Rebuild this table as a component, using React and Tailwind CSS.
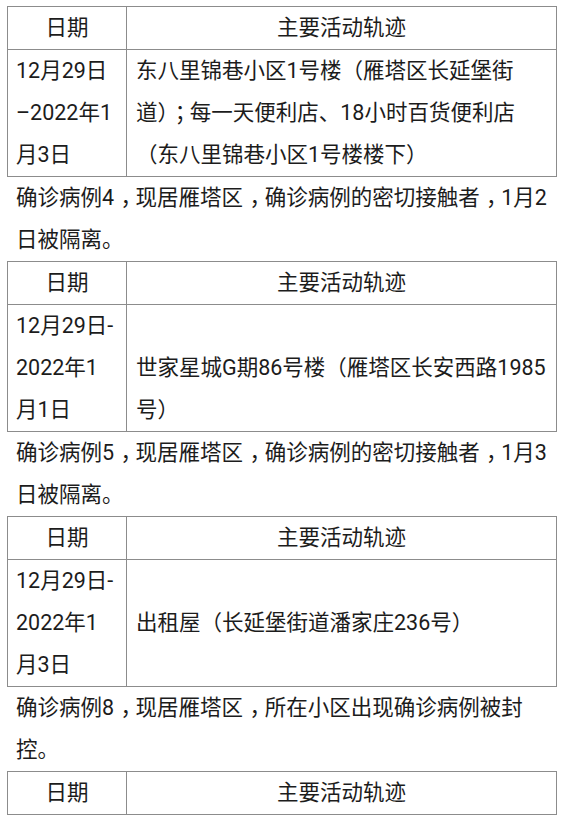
const tables = [
  {
    date: '12月29日\u200B–2022年1月3日',
    place: '东八里锦巷小区1号楼（雁塔区长延堡街道）；每一天便利店、18小时百货便利店（东八里锦巷小区1号楼楼下）',
    align: 'align-top',
    note: '确诊病例4，现居雁塔区，确诊病例的密切接触者，1月2日被隔离。',
  },
  {
    date: '12月29日-2022年1月1日',
    place: '世家星城G期86号楼（雁塔区长安西路1985号）',
    align: 'align-bottom',
    note: '确诊病例5，现居雁塔区，确诊病例的密切接触者，1月3日被隔离。',
  },
  {
    date: '12月29日-2022年1月3日',
    place: '出租屋（长延堡街道潘家庄236号）',
    align: 'align-middle',
    note: '确诊病例8，现居雁塔区，所在小区出现确诊病例被封控。',
  },
]

// full-width comma / semicolon sit nearer the middle of their box in the screenshot
function Punct({ text }) {
  return text.split(/([，；])/).map((part, i) =>
    part === '，' || part === '；' ? (
      <span key={i} className="relative left-[0.3em]">{part}</span>
    ) : (
      part
    )
  )
}

function Header() {
  return (
    <tr>
      <th className="w-[119px] border border-[#8c8c8c] font-normal text-center">日期</th>
      <th className="border border-[#8c8c8c] font-normal text-center">主要活动轨迹</th>
    </tr>
  )
}

export default function App() {
  return (
    <div
      className="w-[563px] h-[821px] overflow-hidden bg-white pt-[6px] text-[#1c1c1c] text-[21.5px] leading-[42px]"
      style={{ fontFamily: 'Roboto, "Noto Sans CJK SC", sans-serif' }}
    >
      {tables.map((t, i) => (
        <div key={i}>
          <table className="mx-[7px] w-[550px] border-collapse">
            <tbody>
              <Header />
              <tr>
                <td className="border border-[#8c8c8c] px-2 align-top break-all">{t.date}</td>
                <td className={`border border-[#8c8c8c] pl-[9px] pr-1 ${t.align}`}>
                  <Punct text={t.place} />
                </td>
              </tr>
            </tbody>
          </table>
          <p className="pl-4 pr-3">
            <Punct text={t.note} />
          </p>
        </div>
      ))}
      <table className="mx-[7px] w-[550px] border-collapse">
        <tbody>
          <Header />
        </tbody>
      </table>
    </div>
  )
}
